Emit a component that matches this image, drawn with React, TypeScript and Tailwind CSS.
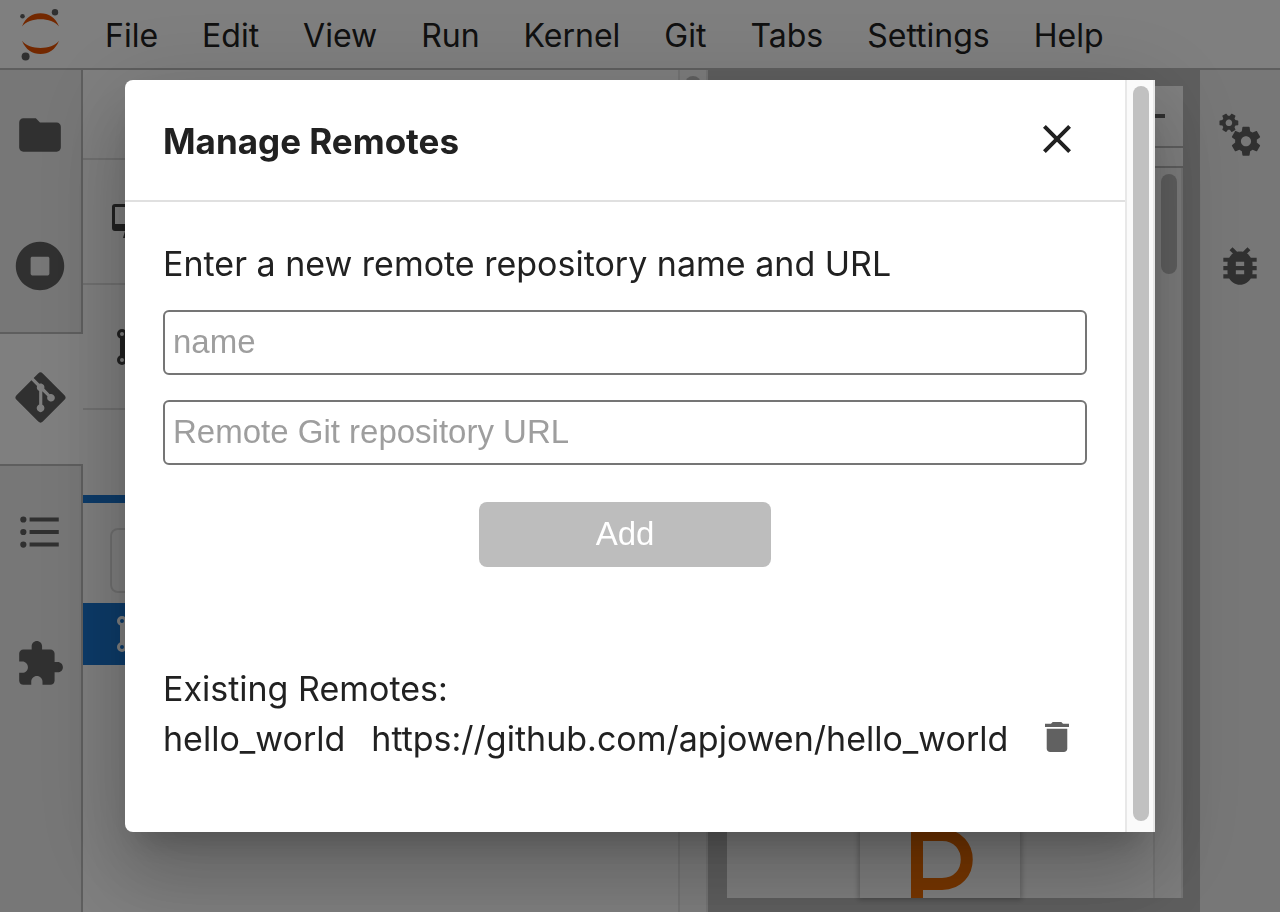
import type { ReactNode } from 'react';
import { FaGitAlt } from 'react-icons/fa';
import { MdClose } from 'react-icons/md';

const menus = ['File', 'Edit', 'View', 'Run', 'Kernel', 'Git', 'Tabs', 'Settings', 'Help'];

const GEAR =
  'M19.43 12.98c.04-.32.07-.64.07-.98s-.03-.66-.07-.98l2.11-1.65c.19-.15.24-.42.12-.64l-2-3.46c-.12-.22-.39-.3-.61-.22l-2.49 1c-.52-.4-1.08-.73-1.69-.98l-.38-2.65C14.46 2.18 14.25 2 14 2h-4c-.25 0-.46.18-.49.42l-.38 2.65c-.61.25-1.17.59-1.69.98l-2.49-1c-.23-.09-.49 0-.61.22l-2 3.46c-.13.22-.07.49.12.64l2.11 1.65c-.04.32-.07.65-.07.98s.03.66.07.98l-2.11 1.65c-.19.15-.24.42-.12.64l2 3.46c.12.22.39.3.61.22l2.49-1c.52.4 1.08.73 1.69.98l.38 2.65c.03.24.24.42.49.42h4c.25 0 .46-.18.49-.42l.38-2.65c.61-.25 1.17-.59 1.69-.98l2.49 1c.23.09.49 0 .61-.22l2-3.46c.12-.22.07-.49-.12-.64l-2.11-1.65zM12 15.5c-1.93 0-3.5-1.57-3.5-3.5s1.57-3.5 3.5-3.5 3.5 1.57 3.5 3.5-1.57 3.5-3.5 3.5z';

function Glyph({ d, box = '0 0 24 24' }: { d: string; box?: string }) {
  return (
    <svg viewBox={box} className="size-[50px]" fill="currentColor" aria-hidden="true">
      <path d={d} />
    </svg>
  );
}

function JupyterLogo() {
  return (
    <svg viewBox="0 0 44 56" className="mb-0.5 h-14 w-11 shrink-0" aria-hidden="true">
      <g fill="#e65100">
        <path d="M4 21.500C7.500 12.500 14.500 8.300 22.500 8.300S37.500 12.500 41 21.500C37 16.500 30 14.300 22.500 14.300S8 16.500 4 21.500Z" />
        <path d="M4 35.800C7.500 44.800 14.500 49 22.500 49S37.500 44.800 41 35.800C37 40.800 30 43 22.500 43S8 40.800 4 35.800Z" />
      </g>
      <g fill="#616161">
        <circle cx="4.500" cy="11.300" r="2.300" />
        <circle cx="37" cy="7.200" r="3.200" />
        <circle cx="7.600" cy="51.500" r="4" />
      </g>
    </svg>
  );
}

function BranchIcon() {
  return (
    <svg viewBox="0 0 30 36" className="h-9 w-[30px]" fill="none" stroke="currentColor" aria-hidden="true">
      <circle cx="5" cy="5" r="3.500" strokeWidth="3" />
      <circle cx="5" cy="31" r="3.500" strokeWidth="3" />
      <circle cx="25" cy="9" r="3.500" strokeWidth="3" />
      <path d="M5.500 9V27M25 13Q25 20 5 23" strokeWidth="5" />
    </svg>
  );
}

function SideTab({ label, active = false, children }: { label: string; active?: boolean; children: ReactNode }) {
  return (
    <button
      type="button"
      aria-label={label}
      className={
        active
          ? 'flex h-[134px] w-full shrink-0 items-center justify-center border-y-2 border-[#bdbdbd] bg-white pr-[3px] pb-1'
          : 'flex h-[132px] w-full shrink-0 items-center justify-center border-r-2 border-[#bdbdbd] pr-px first:h-[130px]'
      }
    >
      {children}
    </button>
  );
}

function LeftBar() {
  return (
    <nav aria-label="Side bar" className="flex w-[83px] shrink-0 flex-col bg-[#eeeeee] text-[#616161]">
      <SideTab label="File browser">
        <Glyph d="M10 4H4c-1.1 0-1.990.9-1.990 2L2 18c0 1.100.9 2 2 2h16c1.100 0 2-.9 2-2V8c0-1.100-.9-2-2-2h-8l-2-2z" />
      </SideTab>
      <SideTab label="Running sessions">
        <Glyph
          box="0 0 512 512"
          d="M256 8C119 8 8 119 8 256s111 248 248 248 248-111 248-248S393 8 256 8zm96 328c0 8.800-7.200 16-16 16H176c-8.800 0-16-7.200-16-16V176c0-8.800 7.200-16 16-16h160c8.800 0 16 7.200 16 16v160z"
        />
      </SideTab>
      <SideTab label="Git" active>
        <FaGitAlt size={57} />
      </SideTab>
      <SideTab label="Table of contents">
        <Glyph d="M7 5H21V7H7V5M7 13V11H21V13H7M4 4.500A1.500 1.500 0 0 1 5.500 6A1.500 1.500 0 0 1 4 7.500A1.500 1.500 0 0 1 2.500 6A1.500 1.500 0 0 1 4 4.500M4 10.500A1.500 1.500 0 0 1 5.500 12A1.500 1.500 0 0 1 4 13.500A1.500 1.500 0 0 1 2.500 12A1.500 1.500 0 0 1 4 10.500M7 19V17H21V19H7M4 16.500A1.500 1.500 0 0 1 5.500 18A1.500 1.500 0 0 1 4 19.500A1.500 1.500 0 0 1 2.500 18A1.500 1.500 0 0 1 4 16.500Z" />
      </SideTab>
      <SideTab label="Extensions">
        <Glyph d="M20.500 11H19V7c0-1.100-.9-2-2-2h-4V3.500C13 2.120 11.880 1 10.500 1S8 2.120 8 3.500V5H4c-1.100 0-1.990.9-1.990 2v3.800H3.500c1.490 0 2.700 1.210 2.700 2.700s-1.210 2.700-2.700 2.700H2V20c0 1.100.9 2 2 2h3.800v-1.500c0-1.490 1.210-2.700 2.700-2.700s2.700 1.210 2.700 2.700V22H17c1.100 0 2-.9 2-2v-4h1.500c1.380 0 2.500-1.120 2.500-2.500S21.880 11 20.500 11z" />
      </SideTab>
      <div className="flex-1 border-r-2 border-[#bdbdbd]" />
    </nav>
  );
}

function GitPanel() {
  return (
    <section aria-label="Git panel" className="flex min-w-0 flex-1 bg-white text-[#424242]">
      <div className="flex min-w-0 flex-1 flex-col">
        <div className="h-[90px] border-b-2 border-[#e0e0e0]" />
        <div className="flex h-[125px] items-center border-b-2 border-[#e0e0e0] pl-7">
          <svg viewBox="0 0 42 36" className="h-9 w-[42px]" fill="currentColor" aria-hidden="true">
            <path d="M4 0h34q3 0 3 3v21q0 3-3 3H27l3 7H12l2-7H4q-3 0-3-3V3q0-3 3-3zm0 3v17h34V3z" />
          </svg>
        </div>
        <div className="flex h-[125px] items-center border-b-2 border-[#e0e0e0] pl-[34px]">
          <BranchIcon />
        </div>
        <div className="h-[85px]" />
        <div className="h-2 bg-[#1976d2]" />
        <div className="h-[100px] px-7 py-[25px]">
          <div className="-ml-px h-[65px] rounded-lg border-2 border-[#e0e0e0]" />
        </div>
        <div className="flex h-[62px] items-center bg-[#1976d2] pl-[34px] text-white">
          <BranchIcon />
        </div>
      </div>
      <div className="flex w-[30px] shrink-0 flex-col items-center border-x-2 border-[#e8e8e8] bg-[#fafafa] pt-1.5">
        <div className="h-80 w-4 rounded-full bg-[#c1c1c1]" />
      </div>
    </section>
  );
}

function NotebookArea() {
  return (
    <main className="flex w-[492px] shrink-0 flex-col bg-[#bdbdbd] pt-4 pr-[17px] pb-3.5 pl-[19px]">
      <div className="flex min-h-0 flex-1 flex-col bg-white">
        <div className="flex h-[62px] items-center justify-end border-b-2 border-[#bdbdbd] pr-[18px]">
          <div className="h-1 w-6 bg-[#616161]" />
        </div>
        <div className="h-5 border-b-2 border-[#bdbdbd]" />
        <div className="flex min-h-0 flex-1">
          <div className="flex flex-1 items-end justify-center">
            <div className="flex h-[200px] w-[160px] items-end pl-[51px] shadow-[0_0_5px_2px_rgba(0,0,0,0.22)]">
              <svg viewBox="0 0 64 76" className="h-[76px] w-16" fill="none" stroke="#ef6c00" strokeWidth="12" aria-hidden="true">
                <path d="M6 76V13H31C64 13 64 62 31 62H6" />
              </svg>
            </div>
          </div>
          <div className="flex w-[30px] shrink-0 justify-end border-x-2 border-[#e8e8e8] bg-[#fafafa] pt-1.5 pr-1">
            <div className="h-[100px] w-4 rounded-full bg-[#c1c1c1]" />
          </div>
        </div>
      </div>
    </main>
  );
}

function RightBar() {
  return (
    <nav aria-label="Inspector bar" className="flex w-20 shrink-0 flex-col items-center bg-[#eeeeee] text-[#616161]">
      <button type="button" aria-label="Property inspector" className="flex h-[130px] w-full items-center justify-center">
        <svg viewBox="0 0 50 50" className="size-[50px]" fill="currentColor" aria-hidden="true">
          <path d={GEAR} transform="translate(31 31.200) scale(1.450) translate(-12 -12)" />
          <path d={GEAR} transform="translate(13.900 12.800) rotate(30) scale(.94) translate(-12 -12)" />
        </svg>
      </button>
      <button type="button" aria-label="Debugger" className="flex h-[132px] w-full items-center justify-center">
        <Glyph d="M20 8h-2.810c-.45-.78-1.070-1.450-1.820-1.960L17 4.410 15.590 3l-2.170 2.170C12.960 5.060 12.490 5 12 5c-.49 0-.96.06-1.410.17L8.410 3 7 4.410l1.620 1.630C7.880 6.550 7.260 7.220 6.810 8H4v2h2.090c-.05.33-.09.66-.09 1v1H4v2h2v1c0 .34.04.67.09 1H4v2h2.810c1.040 1.790 2.970 3 5.190 3s4.150-1.210 5.190-3H20v-2h-2.090c.05-.33.09-.66.09-1v-1h2v-2h-2v-1c0-.34-.04-.67-.09-1H20V8zm-6 8h-4v-2h4v2zm0-4h-4v-2h4v2z" />
      </button>
    </nav>
  );
}

const fieldClass =
  "h-[65px] w-full rounded-md border-2 border-[#757575] bg-white px-2 pb-0.5 font-['Liberation_Sans',Arial,sans-serif] text-[33px] text-[#212121] outline-none placeholder:text-[#9e9e9e]";

function RemotesDialog() {
  return (
    <div
      role="dialog"
      aria-modal="true"
      aria-labelledby="remotes-title"
      className="flex w-full max-w-[1030px] overflow-hidden rounded-l-lg bg-white text-[#212121] shadow-[0_22px_30px_-14px_rgba(0,0,0,0.2),0_48px_76px_6px_rgba(0,0,0,0.14),0_18px_92px_16px_rgba(0,0,0,0.12)]"
    >
      <div className="min-w-0 flex-1">
        <header className="flex h-[122px] items-center justify-between border-b-2 border-[#e0e0e0] pr-11 pl-[38px]">
          <h2 id="remotes-title" className="pt-0.5 text-[35px] font-bold">
            Manage Remotes
          </h2>
          <button type="button" aria-label="Close" className="flex pb-0.5">
            <MdClose size={48} />
          </button>
        </header>
        <div className="flex flex-col px-[38px] pt-9 pb-[68px]">
          <p className="text-[34px] leading-[52px]">Enter a new remote repository name and URL</p>
          <div className="mt-5 flex flex-col gap-[25px]">
            <input aria-label="Remote name" placeholder="name" className={fieldClass} />
            <input aria-label="Remote URL" placeholder="Remote Git repository URL" className={fieldClass} />
          </div>
          <button
            type="button"
            className="mt-[37px] h-[65px] w-[292px] self-center rounded-lg bg-[#bdbdbd] pb-0.5 font-['Liberation_Sans',Arial,sans-serif] text-[33px] text-white"
          >
            Add
          </button>
          <p className="mt-[97px] text-[34px] leading-[50px]">Existing Remotes:</p>
          <div className="flex h-[50px] items-center text-[34px] leading-[50px]">
            <span>hello_world</span>
            <span className="ml-[26px]">https://github.com/apjowen/hello_world</span>
            <button type="button" aria-label="Remove hello_world" className="mr-[18px] ml-auto flex pb-1 text-[#616161]">
              <svg viewBox="5 3 14 18" preserveAspectRatio="none" className="h-[30px] w-6" fill="currentColor" aria-hidden="true">
                <path d="M6 19c0 1.100.9 2 2 2h8c1.100 0 2-.9 2-2V7H6v12zM19 4h-3.500l-1-1h-5l-1 1H5v2h14V4z" />
              </svg>
            </button>
          </div>
        </div>
      </div>
      <div className="flex w-[30px] shrink-0 justify-end border-x-2 border-[#e8e8e8] bg-[#fafafa] pt-1.5 pr-1 pb-[11px]">
        <div className="w-4 rounded-full bg-[#c1c1c1]" />
      </div>
    </div>
  );
}

export default function App() {
  return (
    <div className="relative flex h-screen flex-col overflow-hidden bg-white font-[Inter,sans-serif] text-[#212121]">
      <header className="flex h-[70px] shrink-0 items-center border-b-2 border-[#bdbdbd] pl-[18px]">
        <JupyterLogo />
        <nav aria-label="Main menu" className="ml-[43px] flex gap-[44px] pt-1 text-[32px]">
          {menus.map((m) => (
            <button key={m} type="button">
              {m}
            </button>
          ))}
        </nav>
      </header>
      <div className="flex min-h-0 flex-1">
        <LeftBar />
        <GitPanel />
        <NotebookArea />
        <RightBar />
      </div>
      <div className="fixed inset-0 flex items-center justify-center bg-black/50 px-16">
        <RemotesDialog />
      </div>
    </div>
  );
}
